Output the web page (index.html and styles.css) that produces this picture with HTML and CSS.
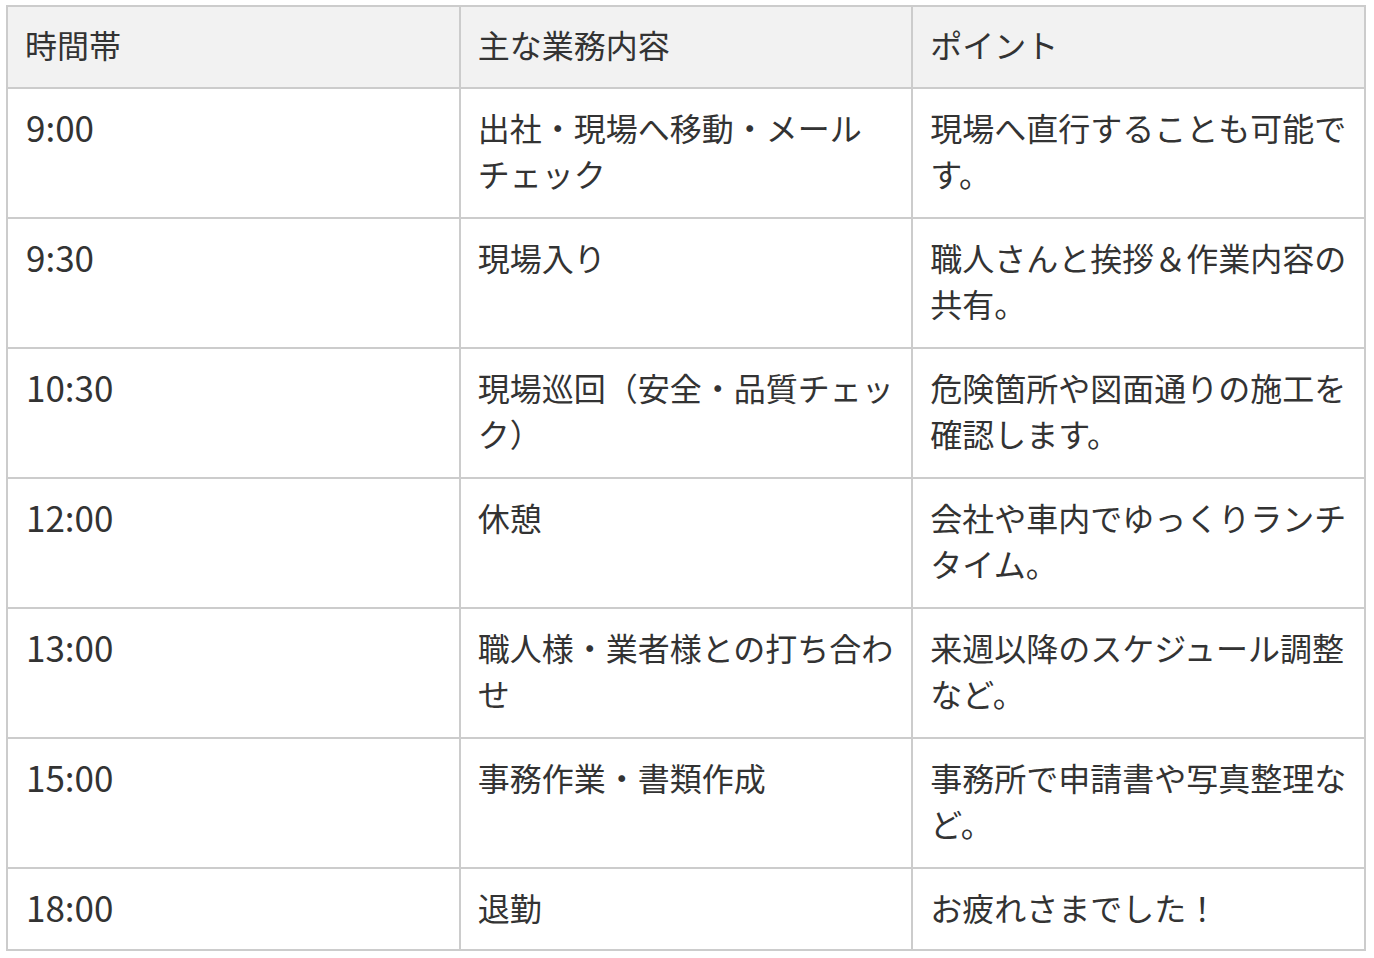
FILE: index.html
```html
<!DOCTYPE html>
<html lang="ja">
<head>
<meta charset="utf-8">
<link rel="stylesheet" href="styles.css">
</head>
<body>
<table class="schedule">
  <colgroup><col class="c1"><col class="c2"><col class="c3"></colgroup>
  <thead>
    <tr><th>時間帯</th><th>主な業務内容</th><th>ポイント</th></tr>
  </thead>
  <tbody>
    <tr><td class="time">9:00</td><td>出社・現場へ移動・メール<br>チェック</td><td>現場へ直行することも可能で<br>す。</td></tr>
    <tr><td class="time">9:30</td><td>現場入り</td><td>職人さんと挨拶＆作業内容の<br>共有。</td></tr>
    <tr><td class="time">10:30</td><td>現場巡回（安全・品質チェッ<br>ク）</td><td>危険箇所や図面通りの施工を<br>確認します。</td></tr>
    <tr><td class="time">12:00</td><td>休憩</td><td>会社や車内でゆっくりランチ<br>タイム。</td></tr>
    <tr><td class="time">13:00</td><td>職人様・業者様との打ち合わ<br>せ</td><td>来週以降のスケジュール調整<br>など。</td></tr>
    <tr><td class="time">15:00</td><td>事務作業・書類作成</td><td>事務所で申請書や写真整理な<br>ど。</td></tr>
    <tr class="last"><td class="time">18:00</td><td>退勤</td><td>お疲れさまでした！</td></tr>
  </tbody>
</table>
</body>
</html>
```

FILE: styles.css
```css
html, body {
  background: #ffffff;
}
body {
  margin: 5px 0 0 6px;
  font-family: "Noto Sans CJK JP", "Noto Sans", sans-serif;
  color: #333333;
}
.schedule {
  width: 1360px;
  border-collapse: collapse;
  table-layout: fixed;
  border: 2px solid #cccccc;
}
.schedule col {
  width: 33.333%;
}
.schedule th,
.schedule td {
  border: 2px solid #cccccc;
  padding: 15px 12px 21px 17px;
  font-size: 32px;
  line-height: 46px;
  text-align: left;
  vertical-align: top;
  font-weight: normal;
  white-space: nowrap;
}
.schedule th {
  background: #f2f2f2;
  padding-top: 14px;
  padding-bottom: 20px;
}
.schedule td.time {
  font-size: 35px;
  padding-left: 18px;
}
.schedule tr.last td {
  padding-bottom: 19px;
}
```
